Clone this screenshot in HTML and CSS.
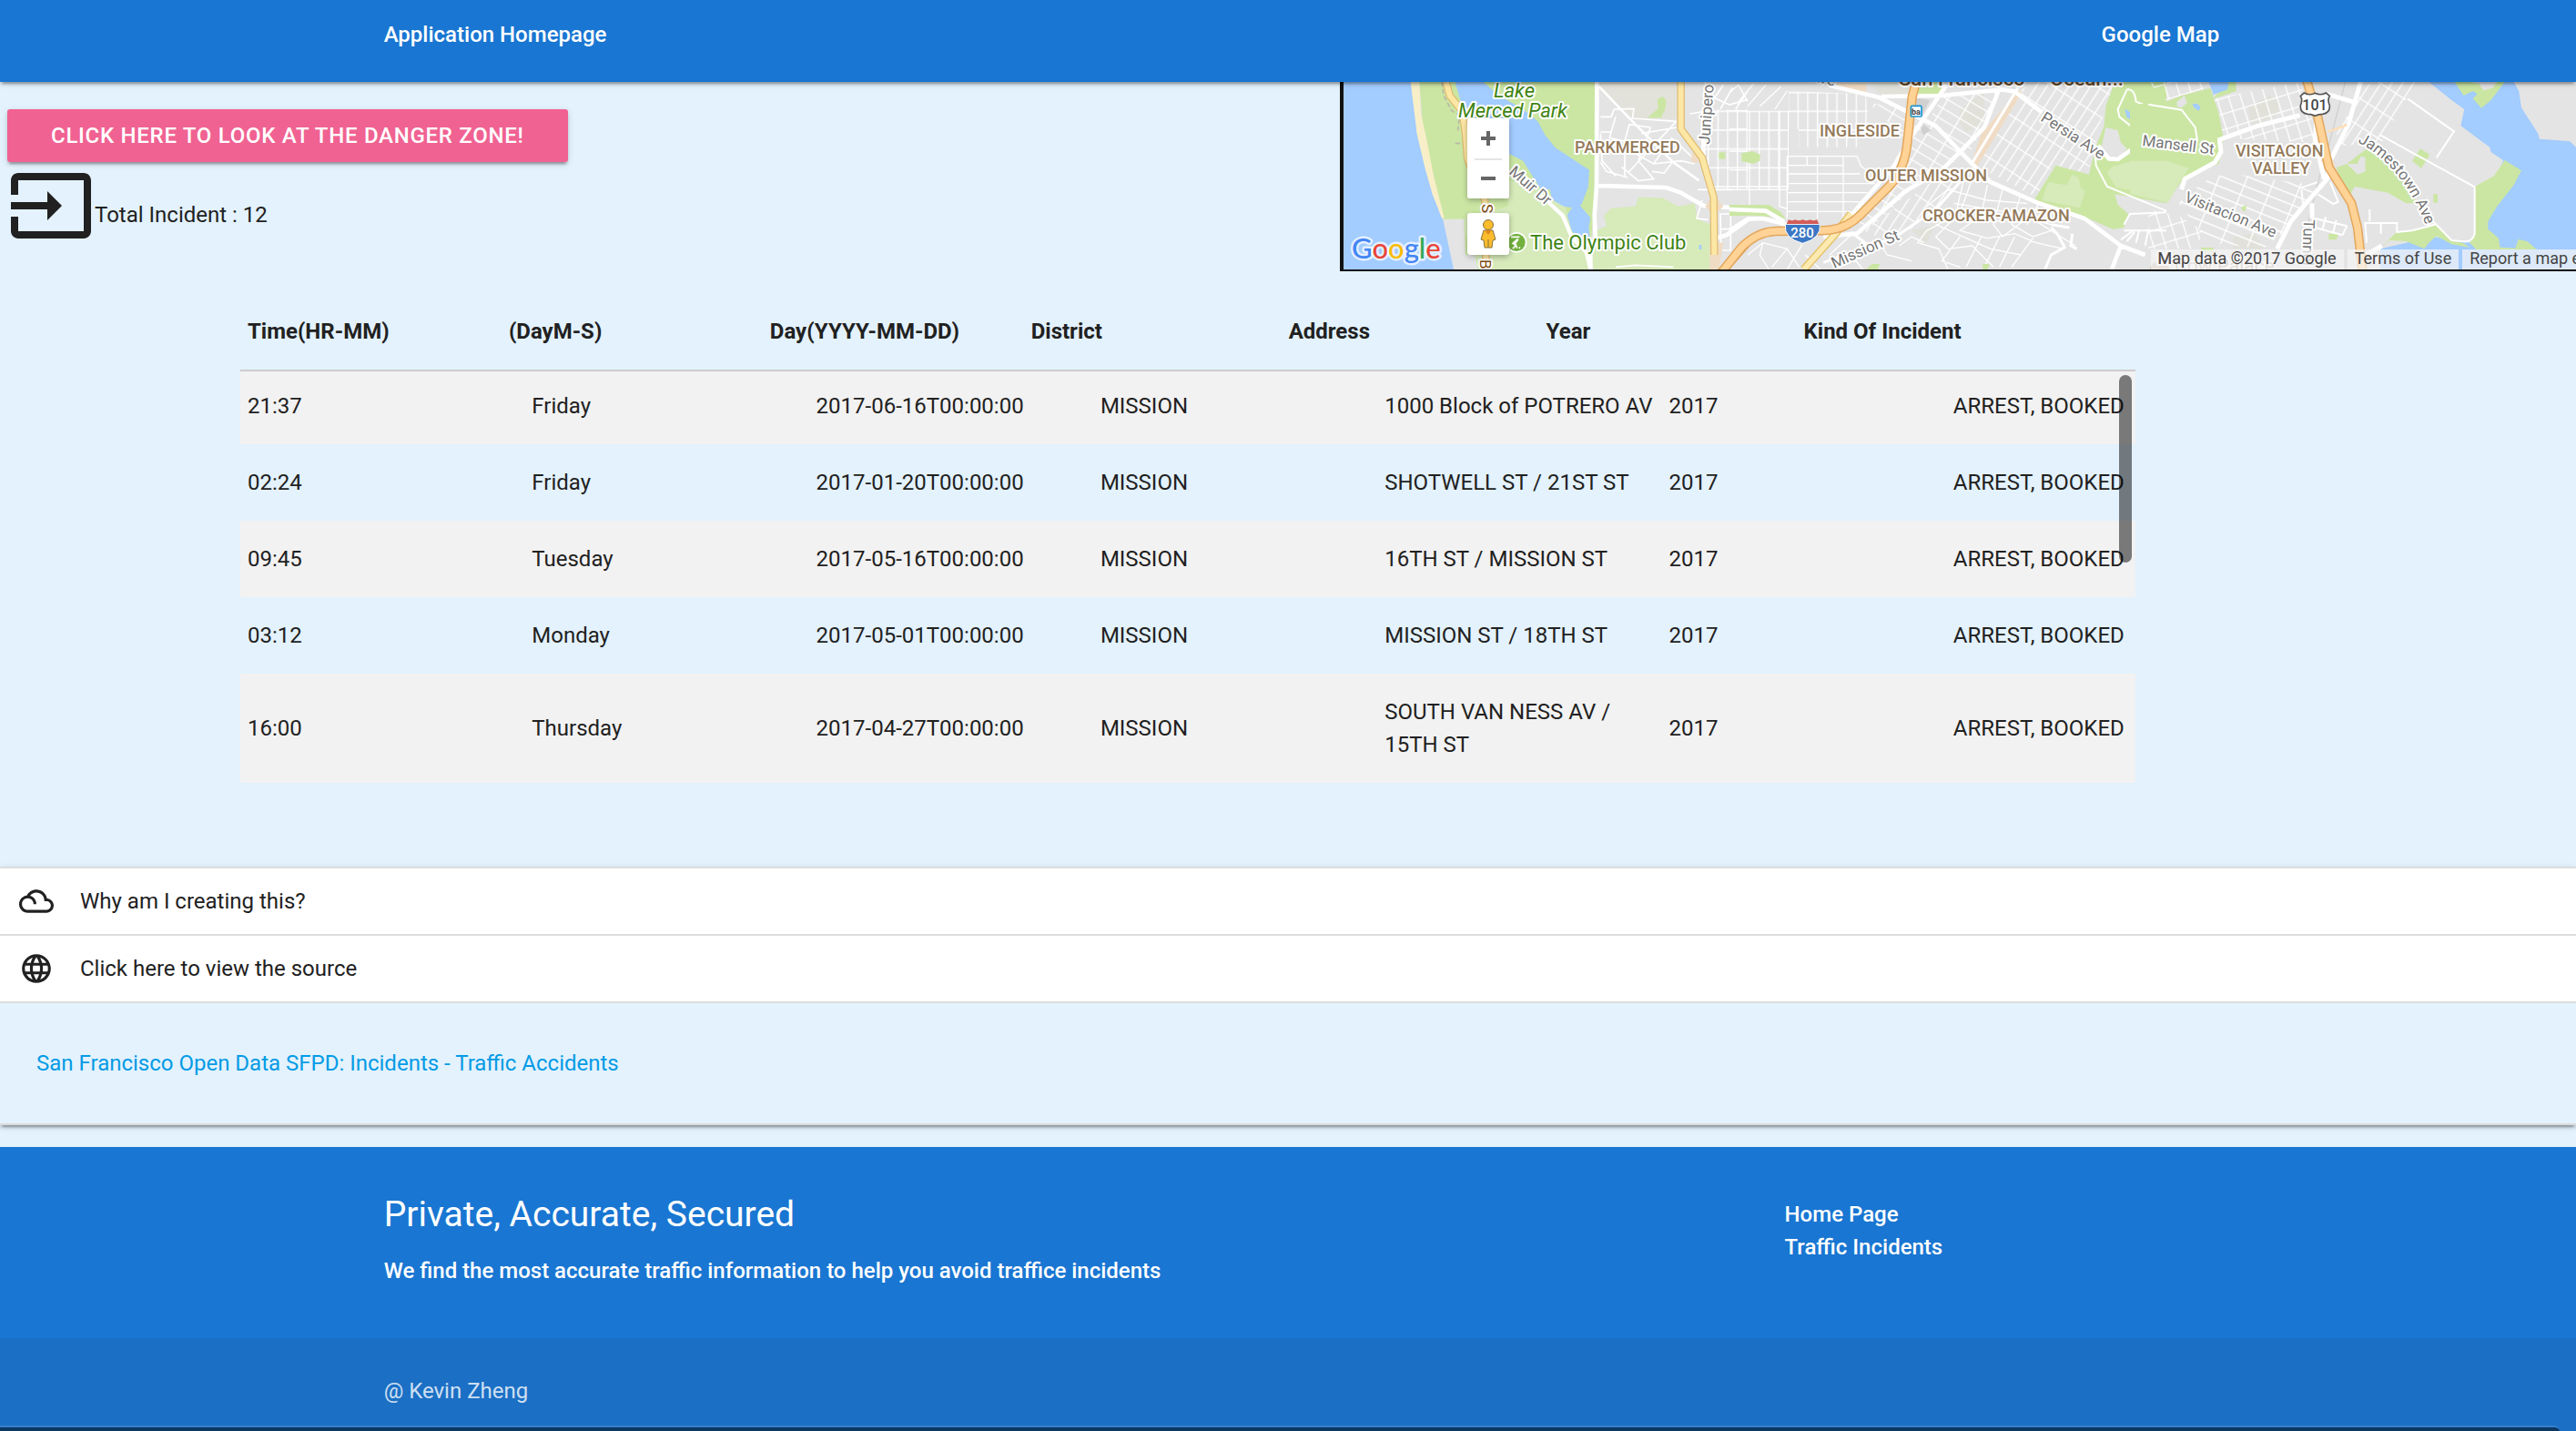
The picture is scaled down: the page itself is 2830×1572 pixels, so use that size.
FILE: index.html
```html
<!DOCTYPE html>
<html lang="en">
<head>
<meta charset="utf-8">
<title>Traffic Incidents</title>
<meta name="viewport" content="width=device-width, initial-scale=1">
<link rel="stylesheet" href="styles.css">
</head>
<body>
<header class="topbar">
  <nav class="topbar-nav">
    <a href="#home">Application Homepage</a>
    <a href="#map">Google Map</a>
  </nav>
</header>

<main>
  <section class="overview">
    <div class="summary">
      <button class="danger-btn" type="button">CLICK HERE TO LOOK AT THE DANGER ZONE!</button>
      <div class="total">
        <svg class="total-icon" viewBox="0 0 24 24" aria-hidden="true"><path d="M21 3.01H3c-1.1 0-2 .9-2 2V9h2V4.99h18v14.03H3V15H1v4.01c0 1.1.9 1.98 2 1.98h18c1.1 0 2-.88 2-1.98v-14c0-1.11-.9-2-2-2zM11 16l4-4-4-4v3H1v2h10v3z"/></svg>
        <span class="total-text">Total Incident : 12</span>
      </div>
    </div>

    <div class="map" id="map">
      <svg class="map-canvas" viewBox="0 0 1354 206" aria-label="Map of southern San Francisco">
        <defs>
          <pattern id="blocks" width="64" height="62" patternUnits="userSpaceOnUse"><path d="M2 0V62M34 0V62M0 3H64" fill="none" stroke="#fff" stroke-width="4"/></pattern>
          <pattern id="slope" width="66" height="33" patternUnits="userSpaceOnUse" patternTransform="rotate(31)"><path d="M2 0V33M0 2H66" fill="none" stroke="#fff" stroke-width="4"/></pattern>
          <pattern id="steep" width="30" height="78" patternUnits="userSpaceOnUse" patternTransform="rotate(33)"><path d="M2 0V78M0 2H30" fill="none" stroke="#fff" stroke-width="4"/></pattern>
          <pattern id="tilt" width="38" height="50" patternUnits="userSpaceOnUse" patternTransform="rotate(-17)"><path d="M2 0V50M0 2H38" fill="none" stroke="#fff" stroke-width="4"/></pattern>
          <pattern id="valley" width="86" height="32" patternUnits="userSpaceOnUse" patternTransform="rotate(22)"><path d="M2 0V32M0 2H86" fill="none" stroke="#fff" stroke-width="4"/></pattern>
        </defs>
        <rect width="1354" height="206" fill="#e4e4e4"/>

        <!-- coast, Lake Merced and Parkmerced -->
        <g transform="translate(-16 -10) scale(.33333)">
          <path fill="#a3ccff" d="M48 30H275L290 200 340 400 375 480 411 648H48z"/>
          <path fill="#cbe6a3" d="M298 30H878V380L872 470 858 600H450L445 482H376L345 340 310 190z"/>
          <path fill="#f8efc8" d="M269 30H298L302 130 322 220 345 340 380 478 372 480 342 400 318 320 290 200z"/>
          <path fill="#d6eaba" d="M590 355L640 365 730 400 780 440 800 520 870 590 855 648H490L480 600 445 520 445 480 590 440z"/>
          <path fill="#e2e2da" d="M890 30H1150V150L1010 155 890 60z"/>
          <path fill="#a3ccff" d="M415 30H508L560 75 640 120 688 160 712 205 746 247 858 320 854 378 832 434 812 446 774 440 735 418 728 384 700 388 640 290 595 268 540 200 440 110z"/>
          <path fill="#a3ccff" d="M785 468L800 446 826 436 862 478 856 510 862 562 830 556 800 520z"/>
          <path fill="#d6eaba" d="M905 470L930 446 1010 440 1020 410 1100 412 1150 440 1205 430 1215 482 1260 500 1255 648H872L860 600 880 520 915 505z"/>
          <path fill="#cbe6a3" d="M1050 148L1085 118 1082 88 1100 78 1112 92 1108 120 1095 148zM1284 262H1306V284H1284zM1360 266H1380V292H1360z"/>
          <path fill="url(#blocks)" d="M1240 120H1380V385H1262L1245 300 1240 210z"/>
          <path fill="none" stroke="#fff" stroke-width="5" d="M1190 135L1235 128M1240 30L1262 118M1262 95L1300 40M1290 120L1330 50M1340 120L1380 60M1265 80L1320 105 1380 88M895 145H930L940 120 1005 118 1000 150 1145 160M895 195H930L945 145M895 295L915 325 985 345M930 195L925 215 975 225M975 225L990 170 1060 180M975 225V345M1060 180L1020 290 1070 350 1020 356 965 310M1145 160L1060 250 985 330M1145 180L1030 200M1000 260L1070 300 1160 290 1205 300M1070 300L1130 215 1200 280M1135 290L1105 330 1065 325M895 200L900 290 945 340M1215 385L1330 385M1230 420L1212 480 1250 484M1290 465H1324V585H1292zM1292 515H1324M945 640L1010 634 1135 640"/>
          <path fill="none" stroke="#fff" stroke-width="8" d="M890 45L1000 160 1135 295 1220 355"/>
          <path fill="none" stroke="#fff" stroke-width="14" stroke-linejoin="round" d="M883 30L882 372 875 470 878 540 862 600V648M882 372L1110 378 1160 395 1235 438 1380 448M1234 125V290M1260 550L1310 535 1380 485"/>
          <path fill="none" stroke="#fff" stroke-width="13" stroke-linejoin="round" d="M700 405L770 470 800 540 848 590 862 648"/>
          <path fill="none" stroke="#b9b9a6" stroke-width="5" stroke-dasharray="16 8" d="M372 30L378 75 405 125 430 140 425 190M416 232L446 234V222"/>
          <path fill="#f0dcc4" d="M1195 265L1225 265 1225 295 1195 295zM1268 400L1300 440 1268 470 1240 440zM1255 560H1300L1285 648H1255z"/>
          <path fill="none" stroke="#dfb96f" stroke-width="25" stroke-linejoin="round" d="M386 30L398 75 440 128 450 200 456 280 480 350 514 420 518 648M1160 30V185L1230 280 1268 410 1270 600"/>
          <path fill="none" stroke="#fde7a5" stroke-width="18" stroke-linejoin="round" d="M386 30L398 75 440 128 450 200 456 280 480 350 514 420 518 648M1160 30V185L1230 280 1268 410 1270 600"/>
          <path fill="none" stroke="#e3a75c" stroke-width="28" d="M1290 660L1392 546"/><path fill="none" stroke="#ffd296" stroke-width="20" d="M1290 660L1392 546"/>
          <circle cx="618" cy="559" r="34" fill="#fff"/><circle cx="618" cy="559" r="29" fill="#73b13f"/>
          <path fill="none" stroke="#fff" stroke-width="5" d="M600 541H628M622 548L606 562 616 568 606 580M624 548L614 562 620 578"/><circle cx="628" cy="577" r="3" fill="#fff"/>
          <path fill="#a3ccff" d="M1220 567H1228V582H1220z"/>
        </g>

        <!-- Ingleside, Outer Mission and Crocker-Amazon -->
        <g transform="translate(424 -10) scale(.33333)">
          <path fill="#e1e1da" d="M460 30H600V75H500zM760 120L840 60 840 160 780 195 755 160zM600 520L680 500 650 560z"/>
          <path fill="url(#blocks)" d="M60 125H195V385H60zM195 60L450 70 460 185 430 245H228V185H195z"/>
          <path fill="url(#steep)" d="M950 60L1010 30H1240L1270 30 1225 160 1205 250 1180 330 1060 310 1010 410 900 350 800 300z"/>
          <path fill="url(#slope)" d="M460 100L560 110 700 200 770 265 700 330 600 385 480 500 420 500 560 320 580 220z"/>
          <path fill="url(#slope)" d="M700 80L890 60 840 170 790 270 650 170z"/>
          <path fill="url(#steep)" d="M500 480L680 350 760 350 720 420 630 490 540 560 440 520z"/>
          <path fill="none" stroke="#fff" stroke-width="4" d="M0 65L30 40 60 95M30 95L80 35M60 110L120 40M100 110L170 45M190 60L150 120M0 125H60M0 185H60M0 258H60M0 320H60M0 385H190M165 125V440L190 448M190 275H420L435 310 470 330M190 305H375M190 275V480M190 333H430M190 365H480M190 395H455M190 425H430M190 457H400M290 275V480M375 275V480M256 275V305M66 385V470M650 440L720 385 850 420 980 430M770 360L745 470 650 520 620 560 690 580 720 648M800 350L760 460 680 540 720 580 800 570 870 640M850 370L830 470 760 520 850 545 940 530 1010 560 1100 580M900 385L870 500 900 540 980 480 1060 500M960 400L930 500 1000 540 1060 520M1020 430L980 500M700 470L860 490 1060 470M740 430L980 470 1140 570M680 500L860 580 960 600M760 540L700 620 760 640M830 540L780 640M890 540L840 640M940 540L890 640M1000 545L930 640"/>
          <path fill="none" stroke="#fff" stroke-width="4" d="M60 600L110 560 190 580 230 640M110 560L100 600 130 648M190 580L140 640M240 565L190 648M250 600L300 648M400 535L330 600M450 560L400 600 440 648M490 550L520 600 600 620M560 570L600 540 640 560"/>
          <path fill="#cbe6a3" d="M610 72L625 30H710L690 72zM40 265L75 258 102 270 100 290 78 300 45 292zM0 435H130L170 460 185 482 130 474 80 470 0 472zM1075 305L1185 335 1205 250 1235 175 1240 110 1270 30H1440V430L1270 400 1280 435 1315 465 1300 510 1265 516 1160 470 1005 418zM450 648L470 630 495 630 490 648zM835 630H858L850 648H835z"/>
          <path fill="#d6eaba" d="M1245 330L1260 310 1330 290 1440 295V422L1370 395 1275 378zM1050 360L1110 370 1130 335 1150 345 1158 378 1172 390 1155 445 1030 420z"/>
          <path fill="#e4e4e4" d="M1240 180L1280 190 1290 230 1310 250 1280 285 1250 280 1225 250z"/>
          <path fill="none" stroke="#fff" stroke-width="6" d="M1310 55L1280 120 1285 145 1360 205 1440 218M1310 55Q1335 50 1340 95L1365 105 1440 112M1205 260L1208 305 1245 375 1440 455M1300 500L1320 465 1440 460M1300 520L1440 520M1290 550L1330 520M1310 555L1335 525M1340 560L1350 520M1370 570L1380 520M1200 648"/>
          <path fill="#a3ccff" d="M1302 118L1318 128 1336 160 1310 148zM1402 256H1410V264H1402z"/>
          <path fill="#d0d0d0" d="M640 170L665 190 640 205 630 190zM600 80L660 90 630 150z"/>
          <path fill="#f0dcc4" d="M940 60L965 62 940 105 815 310 785 290 775 285 800 290 830 200 900 120zM330 35H450V70L340 48z"/>
          <path fill="none" stroke="#fff" stroke-width="14" stroke-linejoin="round" d="M330 42L490 80 590 130 680 175 790 290 860 360 1020 430 1170 480 1290 570 1370 600M500 78L700 75 900 55 940 62 1030 130M715 40L600 210 540 310 400 470M890 50L840 180 700 320 580 390 420 530 310 540M0 450L120 455 180 490M0 520L60 482 110 480 190 500M1290 570L1260 648M1215 240L1250 283 1280 285 1350 235 1420 225"/>
          <path fill="none" stroke="#fff" stroke-width="9" stroke-linejoin="round" d="M950 50L795 305M760 360L680 450 540 545 310 625M1060 510L1080 530 1105 575 1060 600 1040 648M400 525L460 570M1060 500L1120 510M1130 530L1125 570 1145 580"/>
          <path fill="none" stroke="#e5c168" stroke-width="26" d="M245 648L350 530 400 465"/>
          <path fill="none" stroke="#fdeab0" stroke-width="18" d="M245 648L350 530 400 465"/>
          <path fill="none" stroke="#e3a75c" stroke-width="31" stroke-linejoin="round" d="M-60 700L40 575Q90 525 150 522L300 520Q380 520 430 470L530 370Q575 320 585 240L602 80 615 30"/>
          <path fill="none" stroke="#ffd296" stroke-width="22" stroke-linejoin="round" d="M-60 700L40 575Q90 525 150 522L300 520Q380 520 430 470L530 370Q575 320 585 240L602 80 615 30"/>
          <path fill="#3b77c4" stroke="#fff" stroke-width="3" d="M184 499H298Q304 545 241 562 178 545 184 499z"/>
          <path fill="#d35d58" d="M188 498L195 484Q208 490 216 484 232 490 241 483 252 490 266 484 276 490 288 484L295 498z"/>
          <rect x="598" y="109" width="35" height="35" rx="4" fill="#fff" stroke="#1795d2" stroke-width="5"/>
        </g>

        <!-- Visitacion Valley and the bay shore -->
        <g transform="translate(884 -10) scale(.33333)">
          <path fill="#e1e1da" d="M330 110L400 75 435 100 420 145 340 175zM280 540L350 530 380 580H280z"/>
          <path fill="url(#tilt)" d="M215 85L500 30 530 110 560 230 240 215z"/>
          <path fill="url(#tilt)" d="M0 30H200L180 55 60 90z"/>
          <path fill="url(#steep)" d="M700 60L740 30H890L830 120 770 230 640 240 620 200z"/>
          <path fill="url(#valley)" d="M260 330L470 360 560 370 480 470 440 530 380 580 200 560 100 430 180 360z"/>
          <path fill="url(#tilt)" d="M0 450L100 470 180 520 160 580H0z"/>
          <path fill="#cbe6a3" d="M-60 105L60 95 110 75 205 50 232 130 248 215 232 300 170 320 120 345 95 378 60 428-60 400zM217 80L265 30H290V60L220 84z"/>
          <path fill="#d6eaba" d="M-60 290L60 290 135 315 110 350 95 378 65 428-60 400z"/>
          <path fill="#e4e4e4" d="M95 95L120 75 128 100 110 115 95 112z"/>
          <path fill="#a3ccff" d="M200 30H265L262 55 215 72zM145 104Q160 95 172 112L168 125 155 118z"/>
          <path fill="#a3ccff" d="M925 30H1205L1222 60 1230 115 1285 200 1290 218 1390 226 1410 245V648H765V580L940 540 1060 560 1170 290 1130 262 1125 245 1070 205 1030 175 1042 120 1000 90z"/>
          <path fill="#e4e4e4" d="M900 300H1075L1078 530Q1070 558 1040 556L1000 552 940 500 880 440z"/>
          <path fill="#e4e4e4" d="M1000 150L1030 175 1080 212 1125 245 1130 262 1170 288 1076 375 940 280z"/>
          <path fill="#cbe6a3" d="M1076 375L1140 340 1175 288 1230 322 1205 370 1150 440 1120 490 1120 515 1155 545 1160 575 1210 578 1220 548 1250 556 1280 582H1080L1060 560 1078 530zM1010 30H1175L1130 90 1098 116 1070 85 1085 70 1070 60 1040 75z"/>
          <path fill="#e4e4e4" d="M1060 30H1150L1135 50 1105 58 1090 36z"/>
          <path fill="#cbe6a3" d="M765 580L815 528 870 520 945 500 1000 552 1040 562 1060 576 1000 565 950 538 925 560 910 580 850 555 795 552zM620 312L655 300 720 250 745 250 800 285 850 355 885 430 850 430 790 395 680 375 665 405 640 370zM870 290L897 250 928 270 900 315zM940 400H954V428H940zM595 530H628L620 550H595zM305 445L325 435 318 460zM175 576H215V590H175z"/>
          <path fill="#e4e4e4" d="M655 300L690 300 700 275 716 280 716 325 690 335z"/>
          <path fill="none" stroke="#fff" stroke-width="6" d="M0 104L110 122 155 180 162 225M855 85L1008 193 950 280M765 205L1076 376V530Q1070 558 1040 556L1000 552 905 455 890 430M945 500L870 520 820 525V495H715L720 560M730 450L730 490M767 495V530M500 380L560 360M505 385L510 430M600 360L626 425 610 432 560 400M550 480L655 505M550 510L640 535M585 475L575 515M620 485L610 525M655 505L640 535"/>
          <path fill="none" stroke="#d0d0d0" stroke-width="4" d="M650 30L600 220 560 360 530 480 540 640"/>
          <path fill="none" stroke="#fff" stroke-width="15" stroke-linejoin="round" d="M230 222L360 175 500 140M590 70L690 100M700 30L660 170 600 290 590 350 520 430 470 490 425 580M235 220L240 260 220 295 120 350 110 385M555 160L550 220 580 350M540 430L540 480M720 600L770 570"/>
          <path fill="#f0dcc4" d="M570 290L600 330 615 300 590 250z"/>
          <path fill="none" stroke="#ffdfb4" stroke-width="7" d="M590 195L655 172"/>
          <path fill="none" stroke="#e3a75c" stroke-width="31" stroke-linejoin="round" d="M521 20L560 150 595 310 670 430 690 510 706 648"/>
          <path fill="none" stroke="#ffd296" stroke-width="22" stroke-linejoin="round" d="M521 20L560 150 595 310 670 430 690 510 706 648"/>
          <path fill="#fff" stroke="#555" stroke-width="5" d="M502 76L514 66Q532 76 550 67 568 76 586 66L598 76Q590 90 598 108 600 132 575 136 562 136 550 142 538 136 525 136 500 132 502 108 510 90 502 76z"/>
          <circle cx="38" cy="652" r="32" fill="#cbb9ae"/>
        </g>

        <g class="label park">
          <text x="165" y="17">Lake</text><text x="126" y="39">Merced Park</text>
        </g>
        <text class="label club" x="205" y="184">The Olympic Club</text>
        <g class="label area">
          <text x="254" y="78">PARKMERCED</text>
          <text x="523" y="60">INGLESIDE</text>
          <text x="573" y="109">OUTER MISSION</text>
          <text x="636" y="153">CROCKER-AMAZON</text>
          <text x="980" y="82">VISITACION</text>
          <text x="998" y="101">VALLEY</text>
        </g>
        <g class="label city"><text x="610" y="4">San Francisco</text><text x="776" y="4">Ocean...</text></g>
        <g class="label street">
          <text transform="translate(181 100) rotate(41)">Muir Dr</text>
          <text transform="translate(402 69) rotate(-86)">Junipero Serra</text>
          <text transform="translate(765 42) rotate(33)">Persia Ave</text>
          <text transform="translate(539 205) rotate(-24)">Mission St</text>
          <text transform="translate(877 70) rotate(7)">Mansell St</text>
          <text transform="translate(923 131) rotate(22)">Visitacion Ave</text>
          <text transform="translate(1055 151) rotate(92)">Tunnel Ave</text>
          <path id="jamestown" d="M1114 66Q1164 92 1190 160" fill="none" stroke="none"/>
          <text><textPath href="#jamestown">Jamestown Ave</textPath></text>
          <text transform="translate(512 -2) rotate(14)">Ave</text>
        </g>
        <g class="label route">
          <text transform="translate(152 134) rotate(90)">S</text>
          <text transform="translate(150 195) rotate(90)">B</text>
        </g>
        <text class="shield shield-interstate" x="504" y="171">280</text>
        <text class="shield" x="1067" y="31">101</text>
        <text class="shield transit" x="629" y="36">ba</text>
        <text class="label place" x="913" y="209">Cow Palace</text>
        <text class="label place-dark" x="894" y="200">M</text>
        <text class="logo" x="9" y="194"><tspan fill="#4285f4">G</tspan><tspan fill="#ea4335">o</tspan><tspan fill="#fbbc05">o</tspan><tspan fill="#4285f4">g</tspan><tspan fill="#34a853">l</tspan><tspan fill="#ea4335">e</tspan></text>
      </svg>

      <div class="map-controls">
        <div class="zoom">
          <button type="button" aria-label="Zoom in"><svg viewBox="0 0 18 18" aria-hidden="true"><path d="M7 1h4v6h6v4h-6v6H7v-6H1V7h6z"/></svg></button>
          <button type="button" aria-label="Zoom out"><svg viewBox="0 0 18 18" aria-hidden="true"><path d="M1 7h16v4H1z"/></svg></button>
        </div>
        <button class="pegman" type="button" aria-label="Street View"><svg viewBox="0 0 20 32" aria-hidden="true"><path fill="#fbbc2d" stroke="#85733f" d="M5 12h10l3 10-3 1-1 8H6l-1-8-3-1z"/><path fill="#e08a1e" d="M6 12h8l-4 5z"/><path stroke="#85733f" d="M10 22v9"/><circle cx="10" cy="6" r="5.5" fill="#fbbc2d" stroke="#85733f"/></svg></button>
      </div>

      <div class="map-credit">
        <span>Map data ©2017 Google</span>
        <a href="#terms">Terms of Use</a>
        <a href="#report">Report a map error</a>
      </div>
    </div>
  </section>

  <section class="incidents" id="incidents">
    <div class="incidents-box">
      <table class="incident-table">
        <thead>
          <tr><th>Time(HR-MM)</th><th>(DayM-S)</th><th>Day(YYYY-MM-DD)</th><th>District</th><th>Address</th><th>Year</th><th>Kind Of Incident</th></tr>
        </thead>
        <tbody>
          <tr><td>21:37</td><td>Friday</td><td>2017-06-16T00:00:00</td><td>MISSION</td><td>1000 Block of POTRERO AV</td><td>2017</td><td>ARREST, BOOKED</td></tr>
          <tr><td>02:24</td><td>Friday</td><td>2017-01-20T00:00:00</td><td>MISSION</td><td>SHOTWELL ST / 21ST ST</td><td>2017</td><td>ARREST, BOOKED</td></tr>
          <tr><td>09:45</td><td>Tuesday</td><td>2017-05-16T00:00:00</td><td>MISSION</td><td>16TH ST / MISSION ST</td><td>2017</td><td>ARREST, BOOKED</td></tr>
          <tr><td>03:12</td><td>Monday</td><td>2017-05-01T00:00:00</td><td>MISSION</td><td>MISSION ST / 18TH ST</td><td>2017</td><td>ARREST, BOOKED</td></tr>
          <tr><td>16:00</td><td>Thursday</td><td>2017-04-27T00:00:00</td><td>MISSION</td><td>SOUTH VAN NESS AV / 15TH ST</td><td>2017</td><td>ARREST, BOOKED</td></tr>
        </tbody>
      </table>
      <div class="scroll-thumb" aria-hidden="true"></div>
    </div>
  </section>

  <section class="accordion">
    <button class="accordion-head" type="button">
      <svg viewBox="0 0 24 24" aria-hidden="true"><path d="M19.35 10.04C18.67 6.59 15.64 4 12 4 9.11 4 6.61 5.64 5.36 8.04 2.35 8.36 0 10.9 0 14c0 3.31 2.69 6 6 6h13c2.76 0 5-2.24 5-5 0-2.64-2.05-4.78-4.65-4.96zM19 18H6c-2.21 0-4-1.79-4-4s1.79-4 4-4 4 1.79 4 4h2c0-2.76-1.86-5.08-4.4-5.78C8.61 6.88 10.2 6 12 6c3.03 0 5.5 2.47 5.5 5.5v.5H19c1.65 0 3 1.35 3 3s-1.35 3-3 3z"/></svg>
      Why am I creating this?
    </button>
    <button class="accordion-head" type="button">
      <svg viewBox="0 0 24 24" aria-hidden="true"><path d="M11.99 2C6.47 2 2 6.48 2 12s4.47 10 9.99 10C17.52 22 22 17.52 22 12S17.52 2 11.99 2zm6.93 6h-2.95c-.32-1.25-.78-2.45-1.38-3.56 1.84.63 3.37 1.91 4.33 3.56zM12 4.04c.83 1.2 1.48 2.53 1.91 3.96h-3.82c.43-1.43 1.08-2.76 1.91-3.96zM4.26 14C4.1 13.36 4 12.69 4 12s.1-1.36.26-2h3.38c-.08.66-.14 1.32-.14 2s.06 1.34.14 2H4.26zm.82 2h2.95c.32 1.25.78 2.45 1.38 3.56-1.84-.63-3.37-1.9-4.33-3.56zm2.95-8H5.08c.96-1.66 2.49-2.93 4.33-3.56C8.81 5.55 8.35 6.75 8.03 8zM12 19.96c-.83-1.2-1.48-2.53-1.91-3.96h3.82c-.43 1.43-1.08 2.76-1.91 3.96zM14.34 14H9.66c-.09-.66-.16-1.32-.16-2s.07-1.35.16-2h4.68c.09.65.16 1.32.16 2s-.07 1.34-.16 2zm.25 5.56c.6-1.11 1.06-2.31 1.38-3.56h2.95c-.96 1.65-2.49 2.93-4.33 3.56zM16.36 14c.08-.66.14-1.32.14-2s-.06-1.34-.14-2h3.38c.16.64.26 1.31.26 2s-.1 1.36-.26 2h-3.38z"/></svg>
      Click here to view the source
    </button>
    <div class="accordion-body"><a href="#source">San Francisco Open Data SFPD: Incidents - Traffic Accidents</a></div>
  </section>
</main>

<footer class="footer">
  <div class="footer-main">
    <div>
      <h5>Private, Accurate, Secured</h5>
      <p>We find the most accurate traffic information to help you avoid traffice incidents</p>
    </div>
    <ul class="footer-links">
      <li><a href="#home">Home Page</a></li>
      <li><a href="#incidents">Traffic Incidents</a></li>
    </ul>
  </div>
  <div class="footer-bottom">
    <p>@ Kevin Zheng</p>
    <div class="edge"></div>
  </div>
</footer>
</body>
</html>
```
FILE: styles.css
```css
* { box-sizing: border-box; }

body {
  margin: 0;
  background: #e3f2fd;
  color: #212121;
  font: 24px/36px Roboto, "Liberation Sans", sans-serif;
  overflow-x: hidden;
}

a { color: inherit; text-decoration: none; }
p, h5, ul { margin: 0; padding: 0; }
button { border: 0; margin: 0; padding: 0; font: inherit; color: inherit; cursor: pointer; }

/* Top bar */
.topbar {
  position: relative;
  z-index: 2;
  padding: 20px 0 34px 14.9%;
  background: #1976d2;
  color: #fff;
  font-weight: 500;
  box-shadow: 0 3px 3px rgba(0, 0, 0, .14), 0 5px 2px -3px rgba(0, 0, 0, .2), 0 2px 8px rgba(0, 0, 0, .12);
}
.topbar-nav { display: grid; grid-template-columns: 78.35% 1fr; }
.topbar-nav a { justify-self: start; }

/* Summary and map */
.overview { display: grid; grid-template-columns: 52% 48%; margin-bottom: 24px; }
.summary { padding: 30px 8px 0; }
.danger-btn {
  display: block;
  padding: 11px 48px;
  border-radius: 3px;
  background: #f06292;
  color: #fff;
  font-weight: 500;
  letter-spacing: .03em;
  box-shadow: 0 3px 3px rgba(0, 0, 0, .14), 0 5px 2px -3px rgba(0, 0, 0, .2), 0 2px 8px rgba(0, 0, 0, .12);
}
.total { display: flex; align-items: center; }
.total-icon { width: 96px; height: 96px; fill: #212121; }
.total-text { padding-top: 20px; }

.map {
  position: relative;
  overflow: hidden;
  border-left: 4px solid #111;
  border-bottom: 2px solid #111;
  background: #e4e4e4;
}
.map-canvas { display: block; width: 1354px; height: 206px; }
.label { paint-order: stroke; stroke: #fff; stroke-width: 4px; stroke-linejoin: round; }
.label.park { font-size: 22px; font-style: italic; fill: #3f8414; }
.label.club { font-size: 22px; fill: #3f8414; }
.label.area { font-size: 18px; font-weight: 500; fill: #947a5a; }
.label.city { font-size: 22px; font-weight: 500; fill: #6b4c2c; }
.label.street { font-size: 17px; fill: #757575; }
.label.route { font-size: 17px; fill: #7d4a10; }
.label.place { font-size: 21px; fill: #b8a69b; }
.label.place-dark { font-size: 18px; font-weight: 500; fill: #444; }
.shield { font-size: 16px; font-weight: 500; fill: #444; text-anchor: middle; }
.shield-interstate { font-size: 15px; fill: #fff; }
.transit { font-size: 9px; font-weight: 700; }
.logo {
  font-family: Lato, sans-serif;
  font-size: 31px;
  font-weight: 500;
  paint-order: stroke;
  stroke: #fff;
  stroke-opacity: .7;
  stroke-width: 5px;
  stroke-linejoin: round;
}

.map-controls { position: absolute; left: 136px; top: 40px; width: 46px; display: grid; gap: 16px; }
.map-controls button { display: grid; place-items: center; background: #fff; }
.zoom { border-radius: 3px; background: #fff; overflow: hidden; box-shadow: 0 2px 6px rgba(0, 0, 0, .3); }
.zoom button { position: relative; width: 46px; height: 44px; }
.zoom button + button::before { content: ""; position: absolute; top: 0; left: 8px; right: 8px; height: 2px; background: #e6e6e6; }
.zoom svg { width: 18px; height: 18px; fill: #666; }
.pegman { height: 46px; border-radius: 3px; box-shadow: 0 2px 6px rgba(0, 0, 0, .3); }
.pegman svg { width: 20px; height: 32px; }

.map-credit {
  position: absolute;
  left: 887px;
  bottom: 0;
  display: flex;
  gap: 4px;
  font-size: 18px;
  line-height: 20px;
  white-space: nowrap;
  color: #444;
}
.map-credit > * { padding: 0 8px 2px; background: rgba(245, 245, 245, .7); }

/* Incident table */
.incidents { display: grid; grid-template-columns: 264fr 2082fr 484fr; margin-bottom: 92px; }
.incidents-box { grid-column: 2; position: relative; }
.incident-table, .incident-table tbody { display: block; width: 100%; }
.incident-table thead, .incident-table tbody tr { display: table; width: 100%; table-layout: fixed; border-collapse: collapse; }
.incident-table thead { width: 95.7%; }
.incident-table tbody { border-top: 2px solid #ccc; }
.incident-table th, .incident-table td { padding: 24px 8px; text-align: left; vertical-align: middle; }
.incident-table th { font-weight: 700; }
.incident-table th:nth-child(-n+3) { width: 14.4%; }
.incident-table td { width: 15%; }
.incident-table td:last-child { width: 10%; white-space: nowrap; }
.incident-table tbody tr:nth-child(odd) { background: #f2f2f2; }
.incident-table tbody tr:first-child td { padding-top: 20px; }
.scroll-thumb { position: absolute; top: 90px; right: 4px; width: 14px; height: 206px; border-radius: 7px; background: rgba(0, 0, 0, .5); }

/* Accordion */
.accordion {
  margin-bottom: 24px;
  border-top: 2px solid #ddd;
  box-shadow: 0 3px 3px rgba(0, 0, 0, .14), 0 5px 2px -3px rgba(0, 0, 0, .2), 0 2px 8px rgba(0, 0, 0, .12);
}
.accordion-head {
  display: flex;
  align-items: center;
  gap: 29px;
  width: 100%;
  padding: 17px 21px;
  border-bottom: 2px solid #ddd;
  background: #fff;
}
.accordion-head svg { width: 38px; height: 38px; fill: #212121; }
.accordion-body { padding: 48px 40px; border-bottom: 2px solid #ddd; color: #039be5; }

/* Footer */
.footer { background: #1976d2; color: #fff; }
.footer-main { display: grid; grid-template-columns: 63.9% 1fr; padding: 52px 0 56px 14.9%; font-weight: 500; }
.footer h5 { margin-bottom: 22px; font-size: 39px; line-height: 44px; font-weight: 400; }
.footer-links { padding-top: 4px; list-style: none; }
.footer-bottom { padding-top: 40px; background: rgba(51, 51, 51, .08); }
.footer-bottom p { padding: 0 0 20px 14.9%; color: rgba(255, 255, 255, .8); }
.edge { height: 6px; margin-right: 18px; border-top: 2px solid #3580cd; border-top-right-radius: 6px; background: #0a3763; }
```
